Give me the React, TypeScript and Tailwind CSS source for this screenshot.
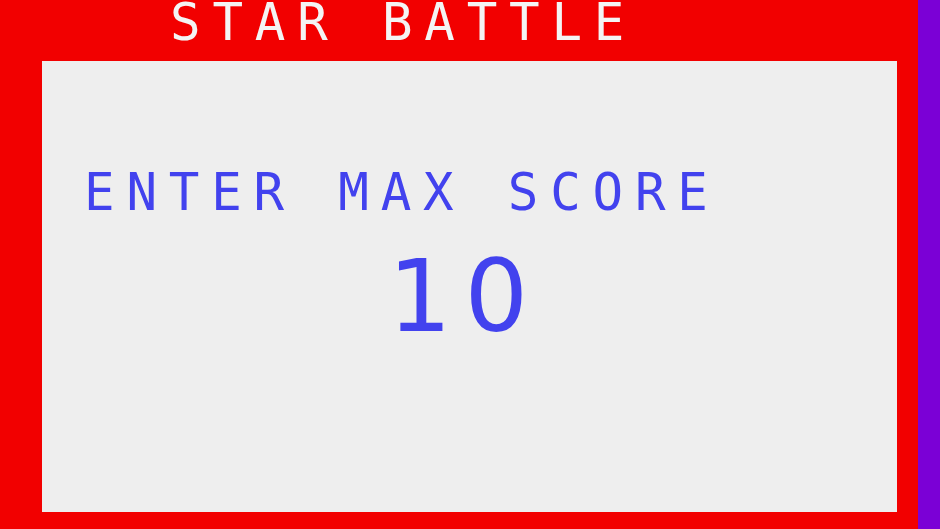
export default function App() {
  const mono = { fontFamily: '"DejaVu Sans Mono", "Liberation Mono", monospace' };
  const sans = { fontFamily: '"DejaVu Sans", "Liberation Sans", sans-serif' };
  return (
    <div className="flex w-[940px] h-[529px] overflow-hidden" style={mono}>
      <div className="flex w-[918px] flex-col bg-[#f20000]">
        <div className="h-[61px] pl-[170px]">
          <div className="text-[50.8px] leading-[46px] tracking-[11.8px] text-[#f4f4f4] whitespace-pre">
            STAR BATTLE
          </div>
        </div>
        <div className="ml-[42px] h-[451px] w-[855px] bg-[#eeeeee] flex flex-col">
          <div className="pl-[42px] pt-[112px] text-[50.8px] leading-[40px] tracking-[11.8px] text-[#4242ee] whitespace-pre">
            ENTER MAX SCORE
          </div>
          <div
            className="pl-[346px] pt-[44px] text-[100px] leading-[80px] tracking-[13px] text-[#4242ee] whitespace-pre"
            style={sans}
          >
            10
          </div>
        </div>
      </div>
      <div className="flex-1 bg-[#7b00d6]" />
    </div>
  );
}
